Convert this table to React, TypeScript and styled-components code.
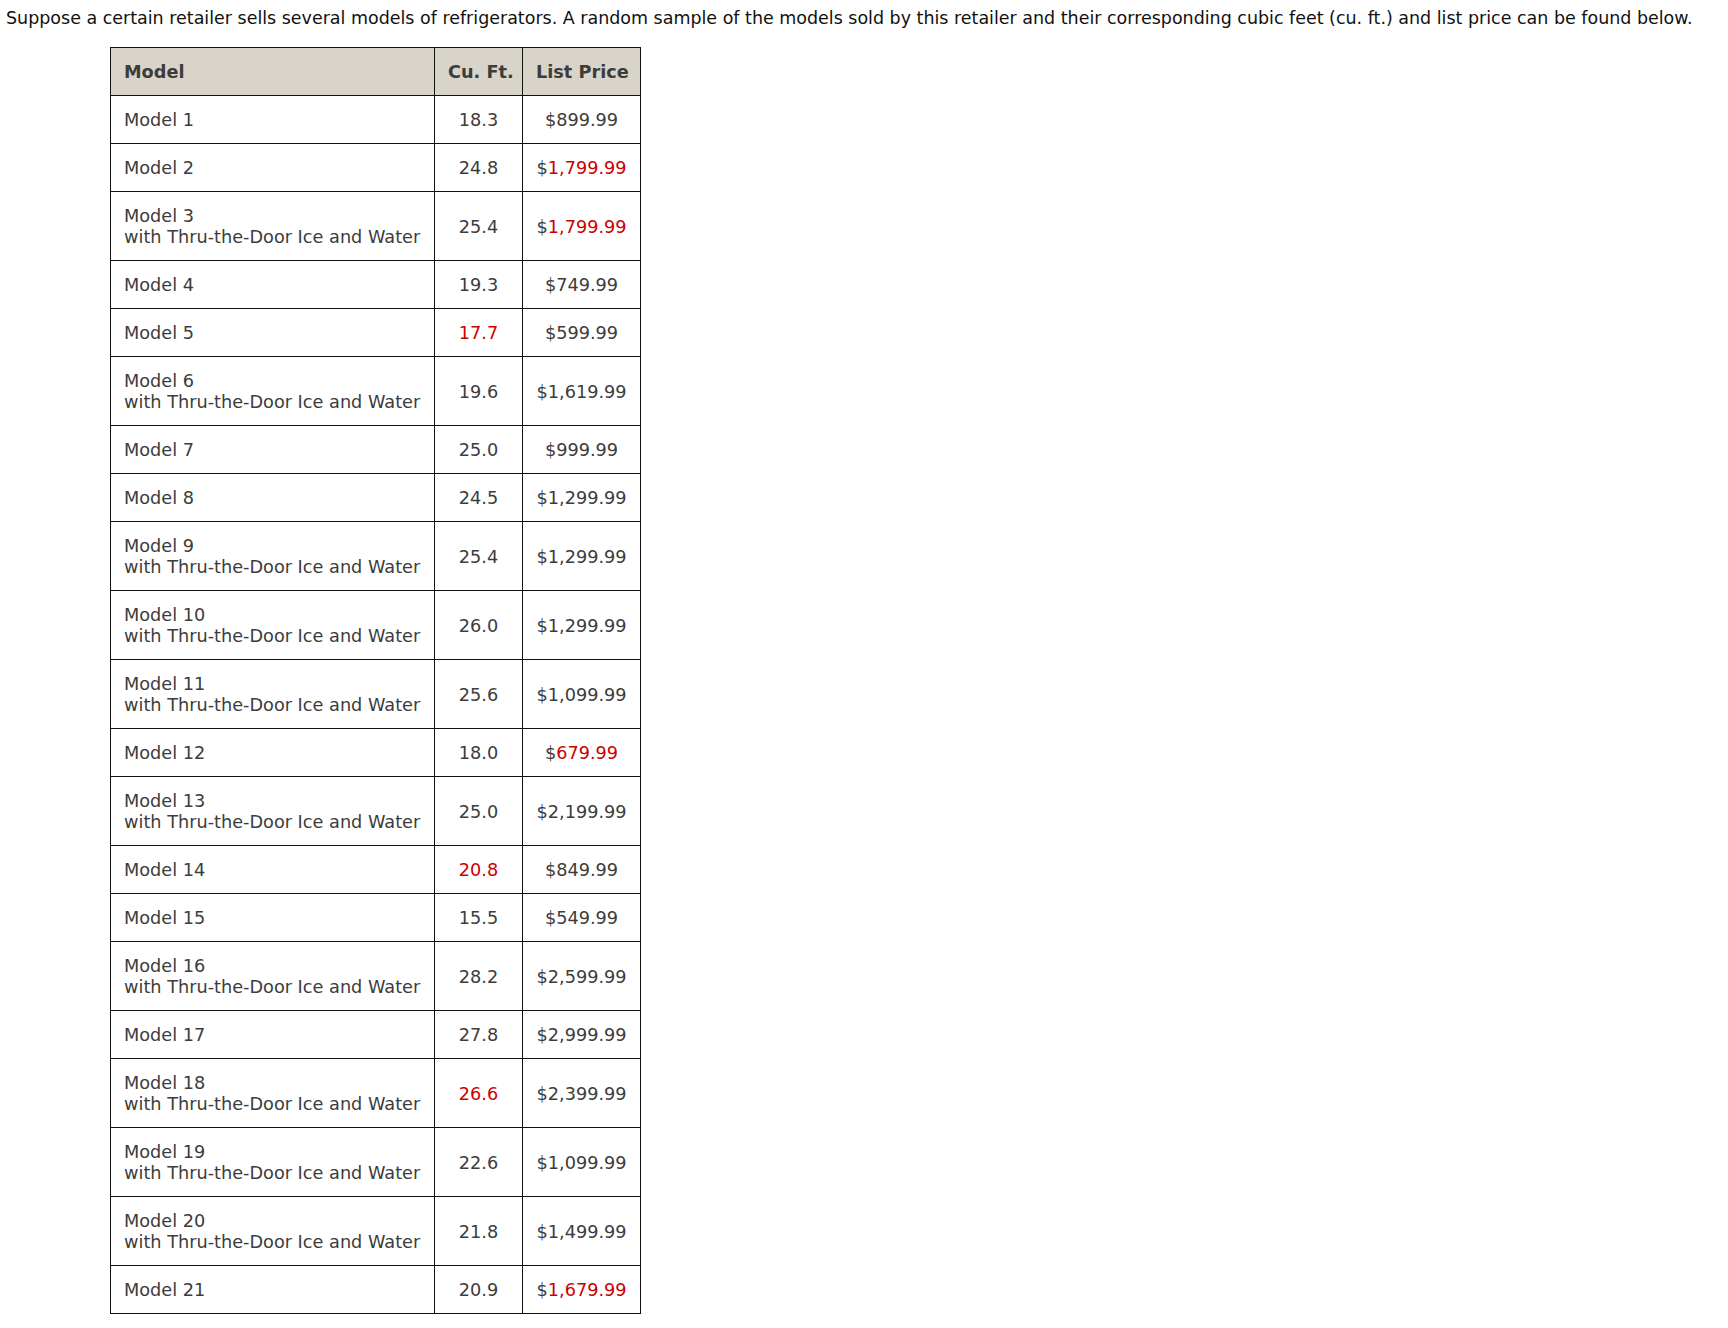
import React from "react";
import styled, { createGlobalStyle } from "styled-components";

const Global = createGlobalStyle`
  html, body { margin: 0; padding: 0; background: #fff; }
  body { font-family: "DejaVu Sans", Verdana, sans-serif; color: #333; }
`;

const Page = styled.div`
  padding: 8px 0 0 6px;
`;

const Intro = styled.p`
  margin: 0;
  font-size: 17.48px;
  line-height: 20px;
  color: #111;
  white-space: nowrap;
`;

const Table = styled.table`
  margin: 19px 0 0 104px;
  width: 530px;
  border-collapse: collapse;
  table-layout: fixed;
  border: 1px solid #111;
  font-size: 17.7px;
  line-height: 21px;
  color: #3c3c3c;
`;

const HeadCell = styled.th<{ $align?: string }>`
  background: #d8d4c9;
  font-weight: bold;
  text-align: ${(p) => p.$align || "center"};
  padding: 14px 13px 12px;
  border: 1px solid #111;
  color: #3c3c3c;
  white-space: nowrap;
`;

const Cell = styled.td<{ $align?: string }>`
  text-align: ${(p) => p.$align || "center"};
  padding: 14px 13px 12px;
  border: 1px solid #111;
  white-space: nowrap;
`;

const Red = styled.span`
  color: #cc0000;
`;

type Row = {
  model: string;
  sub?: boolean;
  cu: string;
  cuRed?: boolean;
  price: string;
  priceRed?: boolean;
};

const rows: Row[] = [
  { model: "Model 1", cu: "18.3", price: "899.99" },
  { model: "Model 2", cu: "24.8", price: "1,799.99", priceRed: true },
  { model: "Model 3", sub: true, cu: "25.4", price: "1,799.99", priceRed: true },
  { model: "Model 4", cu: "19.3", price: "749.99" },
  { model: "Model 5", cu: "17.7", cuRed: true, price: "599.99" },
  { model: "Model 6", sub: true, cu: "19.6", price: "1,619.99" },
  { model: "Model 7", cu: "25.0", price: "999.99" },
  { model: "Model 8", cu: "24.5", price: "1,299.99" },
  { model: "Model 9", sub: true, cu: "25.4", price: "1,299.99" },
  { model: "Model 10", sub: true, cu: "26.0", price: "1,299.99" },
  { model: "Model 11", sub: true, cu: "25.6", price: "1,099.99" },
  { model: "Model 12", cu: "18.0", price: "679.99", priceRed: true },
  { model: "Model 13", sub: true, cu: "25.0", price: "2,199.99" },
  { model: "Model 14", cu: "20.8", cuRed: true, price: "849.99" },
  { model: "Model 15", cu: "15.5", price: "549.99" },
  { model: "Model 16", sub: true, cu: "28.2", price: "2,599.99" },
  { model: "Model 17", cu: "27.8", price: "2,999.99" },
  { model: "Model 18", sub: true, cu: "26.6", cuRed: true, price: "2,399.99" },
  { model: "Model 19", sub: true, cu: "22.6", price: "1,099.99" },
  { model: "Model 20", sub: true, cu: "21.8", price: "1,499.99" },
  { model: "Model 21", cu: "20.9", price: "1,679.99", priceRed: true },
];

export default function App() {
  return (
    <>
      <Global />
      <Page>
        <Intro>
          Suppose a certain retailer sells several models of refrigerators. A random sample of the models sold by this
          retailer and their corresponding cubic feet (cu. ft.) and list price can be found below.
        </Intro>
        <Table>
          <colgroup>
            <col style={{ width: 324 }} />
            <col style={{ width: 88 }} />
            <col style={{ width: 118 }} />
          </colgroup>
          <thead>
            <tr>
              <HeadCell $align="left">Model</HeadCell>
              <HeadCell>Cu. Ft.</HeadCell>
              <HeadCell>List Price</HeadCell>
            </tr>
          </thead>
          <tbody>
            {rows.map((r) => (
              <tr key={r.model}>
                <Cell $align="left">
                  {r.model}
                  {r.sub && (
                    <>
                      <br />
                      with Thru-the-Door Ice and Water
                    </>
                  )}
                </Cell>
                <Cell>{r.cuRed ? <Red>{r.cu}</Red> : r.cu}</Cell>
                <Cell>
                  ${r.priceRed ? <Red>{r.price}</Red> : r.price}
                </Cell>
              </tr>
            ))}
          </tbody>
        </Table>
      </Page>
    </>
  );
}
